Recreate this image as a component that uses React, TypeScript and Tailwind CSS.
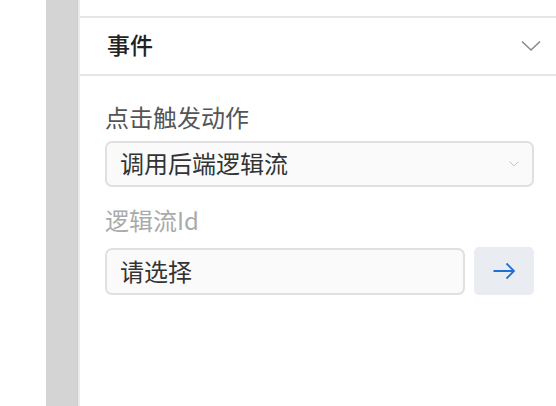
import React from "react";

const FONT = { fontFamily: '"Noto Sans CJK SC", "Noto Sans", sans-serif' };

export default function App() {
  return (
    <div className="flex h-[406px] w-[556px] overflow-hidden bg-white" style={FONT}>
      {/* left gutter */}
      <div className="w-[46px] shrink-0 bg-white" />
      <div className="w-[31px] shrink-0 bg-[#d4d4d4]" />
      <div className="w-[1px] shrink-0 bg-[#cdcdcd]" />
      <div className="w-[2px] shrink-0 bg-[#ececec]" />

      {/* panel */}
      <div className="flex min-w-0 flex-1 flex-col">
        <div className="h-[18px] shrink-0 border-b-2 border-[#e6e6e6]" />

        {/* Events header */}
        <div className="flex h-[58px] shrink-0 items-center justify-between border-b-2 border-[#e6e6e6] pb-[3px] pl-[27px] pr-[15px]">
          <span className="text-[23px] font-medium leading-none text-[#222]">事件</span>
          <svg width="20" height="12" viewBox="0 0 20 12" fill="none" className="mt-[2px]">
            <path d="M1 1.5 L10 10 L19 1.5" stroke="#8a8a8a" strokeWidth="1.6" />
          </svg>
        </div>

        {/* content */}
        <div className="flex flex-col pl-[25px] pr-[22px] pt-[27px]">
          <label className="text-[24px] leading-[28px] text-[#555]">点击触发动作</label>
          <div className="mt-[10px] flex h-[46px] items-center justify-between rounded-[7px] border-2 border-[#e0e0e0] bg-[#fafafa] pl-[13px] pr-[13px]">
            <span className="-mt-[2px] text-[24px] leading-none text-[#333]">调用后端逻辑流</span>
            <svg width="10" height="6" viewBox="0 0 10 6" fill="none">
              <path d="M0.5 0.5 L5 5 L9.5 0.5" stroke="#c4c4c4" strokeWidth="1" />
            </svg>
          </div>

          <label className="mt-[19px] text-[24px] leading-[28px] text-[#aaaaaa]">逻辑流Id</label>
          <div className="mt-[14px] flex gap-[9px]">
            <div className="flex h-[47px] flex-1 items-center rounded-[7px] border-2 border-[#e0e0e0] bg-[#fafafa] pl-[13px]">
              <span className="-mt-[2px] text-[24px] leading-none text-[#333]">请选择</span>
            </div>
            <button className="flex h-[48px] w-[60px] -mt-[1px] items-center justify-center rounded-[5px] bg-[#e9edf2]">
              <svg width="24" height="18" viewBox="0 0 24 18" fill="none">
                <path d="M1.5 9 H22 M14.5 1.5 L22 9 L14.5 16.5" stroke="#1f6fd8" strokeWidth="1.8" />
              </svg>
            </button>
          </div>
        </div>
      </div>
    </div>
  );
}
